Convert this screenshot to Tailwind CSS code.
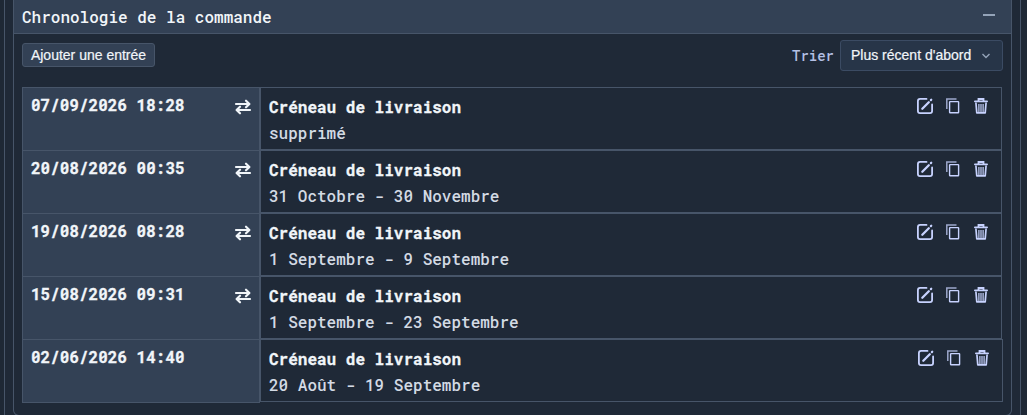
<!DOCTYPE html>
<html lang="fr">
  <head>
    <meta charset="UTF-8" />
    <meta name="viewport" content="width=device-width, initial-scale=1.0" />
    <title>Chronologie de la commande</title>
    <script src="https://cdn.jsdelivr.net/npm/@tailwindcss/browser@4"></script>
  </head>
  <body class="bg-[#1e2835] h-[415px] overflow-hidden text-[#f1f5f9] font-['Roboto_Mono','DejaVu_Sans_Mono',monospace]">

    <!-- Icônes -->
    <svg class="hidden">
      <symbol id="i-swap" viewBox="0 0 18 16">
        <path d="M2 5h13M12 1.7L15.4 5 12 8.3M16 11H3M6 7.7L2.6 11 6 14.3" fill="none" stroke="currentColor" stroke-width="2.2" stroke-linecap="round" stroke-linejoin="round" />
      </symbol>
      <symbol id="i-edit" viewBox="0 0 16 16">
        <path d="M9.5 .9H3A2.1 2.1 0 0 0 .9 3v10A2.1 2.1 0 0 0 3 15.1h10a2.1 2.1 0 0 0 2.1-2.1V6.5" fill="none" stroke="currentColor" stroke-width="1.8" stroke-linecap="round" />
        <path d="M5.3 10.7L11.8 4.2M13.9 2.1l.3-.3" fill="none" stroke="currentColor" stroke-width="2.3" stroke-linecap="round" />
      </symbol>
      <symbol id="i-copy" viewBox="0 0 14 16">
        <path d="M.8 11V.9H10.5" fill="none" stroke="currentColor" stroke-opacity=".75" stroke-width="1.5" />
        <rect x="3.6" y="3.6" width="9" height="11.2" rx=".5" fill="none" stroke="currentColor" stroke-width="1.4" />
      </symbol>
      <symbol id="i-trash" viewBox="0 0 14 16">
        <path d="M.9 3.3h12.2M4.5 2.6V1h5v1.6" fill="none" stroke="currentColor" stroke-width="1.8" stroke-linecap="round" />
        <path d="M1.9 4.5l.9 10.4h8.4l.9-10.4" fill="none" stroke="currentColor" stroke-width="1.7" stroke-linejoin="round" />
        <path d="M4.9 6v8M7 6v8M9.1 6v8" stroke="currentColor" stroke-width="1.2" />
      </symbol>
    </svg>

    <div class="ml-1 w-[1017px] h-[430px] border-x border-[#475569] bg-[#1f2937] pl-2">
      <section class="w-[999px] h-[416px] border-x border-b border-[#475569] rounded-b-md">

        <header class="h-[34px] bg-[#334155] border-b border-[#475569] flex items-center justify-between pl-2 pr-4">
          <h1 class="text-[16px] leading-6 font-medium">Chronologie de la commande</h1>
          <span class="w-3 h-0.5 mb-1 bg-[#94a3b8]"></span>
        </header>

        <!-- Barre d'outils -->
        <div class="flex items-start justify-between h-[53px] pl-2 pr-2">
          <button class="mt-[9px] h-6 w-[133px] rounded-[3px] bg-[#334155] border border-[#475569] font-['Liberation_Sans',sans-serif] text-[14px] leading-[22px] whitespace-nowrap [-webkit-text-stroke:0.2px]">Ajouter une entrée</button>
          <div class="mt-1.5 flex items-center gap-1.5">
            <label class="text-[14px] font-medium text-[#b4c0e4]">Trier</label>
            <div class="w-[163px] h-[31px] rounded-[3px] bg-[#273548] border border-[#3b4b63] flex items-center justify-between pl-2.5 pr-[11px]">
              <span class="font-['Liberation_Sans',sans-serif] text-[14px] whitespace-nowrap [-webkit-text-stroke:0.2px]">Plus récent d'abord</span>
              <svg class="w-2.5 h-2.5 text-[#94a3b8]" viewBox="0 0 10 10"><path d="M1.5 3L5 6.5 8.5 3" fill="none" stroke="currentColor" stroke-width="1.4" /></svg>
            </div>
          </div>
        </div>

        <!-- Entrées -->
        <div id="entrees" class="ml-2"></div>
      </section>
    </div>

    <script>
      const entrees = [
        { date: "07/09/2026 18:28", detail: "supprimé" },
        { date: "20/08/2026 00:35", detail: "31 Octobre - 30 Novembre" },
        { date: "19/08/2026 08:28", detail: "1 Septembre - 9 Septembre" },
        { date: "15/08/2026 09:31", detail: "1 Septembre - 23 Septembre" },
        { date: "02/06/2026 14:40", detail: "20 Août - 19 Septembre" },
      ];

      document.getElementById("entrees").innerHTML = entrees.map((e, i) => {
        const fin = i === entrees.length - 1;
        return `
          <div class="flex items-start text-[16px]">
            <div class="w-[238px] border-x border-t border-[#475569] bg-[#334155] flex items-start justify-between pl-2 pr-[7px] ${fin ? "h-16 border-b" : "h-[63px]"}">
              <b class="mt-[5px] leading-6 [-webkit-text-stroke:0.3px]">${e.date}</b>
              ${fin ? "" : '<svg class="w-[18px] h-4 mt-[11px]"><use href="#i-swap" /></svg>'}
            </div>
            <div class="h-[63px] border border-[#475569] flex justify-between pl-2 ${fin ? "w-[743px]" : "w-[742px]"}">
              <div class="pt-1.5 leading-[26px]">
                <b class="block [-webkit-text-stroke:0.3px]">Créneau de livraison</b>
                <span class="block font-medium text-[#d3dae4]">${e.detail}</span>
              </div>
              <div class="flex gap-[13px] pt-2.5 pr-[13px] text-[#c7d2fe]">
                <svg class="w-4 h-4"><use href="#i-edit" /></svg>
                <svg class="w-3.5 h-4"><use href="#i-copy" /></svg>
                <svg class="w-3.5 h-4 ml-px"><use href="#i-trash" /></svg>
              </div>
            </div>
          </div>`;
      }).join("");
    </script>
  </body>
</html>
